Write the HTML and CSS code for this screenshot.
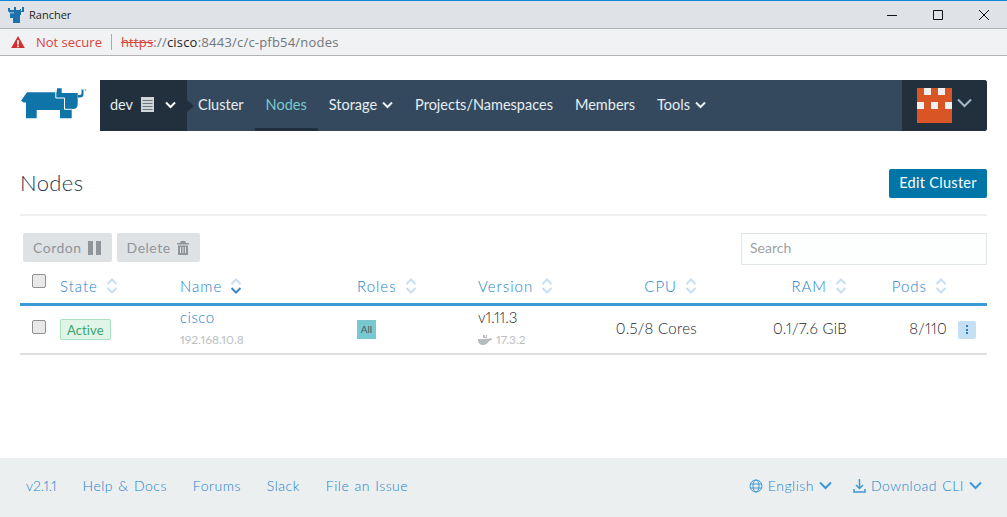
FILE: index.html
```html
<!DOCTYPE html>
<html lang="en">
<head>
<meta charset="utf-8">
<title>Rancher</title>
<link rel="stylesheet" href="styles.css">
</head>
<body>
<div class="titlebar">
  <svg class="fav" width="16" height="17" viewBox="0 0 16 17"><path fill="#1d72ab" d="M0 2h2v2h4V1h2v3h4V3h1v2h1V1h2v5h-3v3h-1v8H5v-5H2V7L0 5z"/><path fill="#7fb4d6" d="M2 6h4v1.500H2z"/></svg>
  <span class="title-text">Rancher</span>
  <div class="winctl">
    <svg width="10" height="10" viewBox="0 0 10 10"><path d="M0 5.500h10" stroke="#111" fill="none"/></svg>
    <svg width="10" height="10" viewBox="0 0 10 10"><path d="M.5.500h9v9h-9z" stroke="#111" fill="none"/></svg>
    <svg width="10" height="10" viewBox="0 0 10 10"><path d="M0 0l10 10M10 0L0 10" stroke="#111" fill="none"/></svg>
  </div>
</div>
<div class="addressbar">
  <svg width="14" height="12" viewBox="0 0 16 14"><path fill="#d32f2f" d="M8 0l8 14H0z"/><path fill="#fff" d="M7 5h2v5H7zM7 11h2v2H7z"/></svg>
  <span class="not-secure">Not secure</span>
  <span class="addr-sep"></span>
  <span class="url"><s class="https">https</s>://<b class="host">cisco</b>:8443/c/c-pfb54/nodes</span>
</div>
<div class="page">
  <header class="top">
    <svg class="logo" width="68" height="34" viewBox="20 88 68 34">
      <path fill="#0f74a8" d="M21 101.700L27 93.300H56.700L57 89.300H61.700V94H77.700V105Q77.700 110 73 110H71.700V119.300H60V111H36.700V119.300H26V103.500L23.500 103.500z"/>
      <path fill="#0f74a8" d="M78 96h1.500q2 0 2-1.500V90.500h2V95q0 3.500-3.500 3.500H78z"/>
      <path fill="none" stroke="#fff" stroke-width="1" d="M55.800 93V99H64.500V110.300H71.700"/>
      <circle cx="85.500" cy="91" r="1" fill="#8fbcd4"/>
    </svg>
    <nav class="nav">
      <div class="cluster">
        <span>dev</span>
        <svg class="server" width="13" height="15" viewBox="0 0 13 15"><rect width="13" height="15" fill="#d3d6d8"/><path d="M1.500 3.500h10M1.500 6.500h10M1.500 9.500h10M1.500 12.500h10" stroke="#6b767e"/></svg>
        <svg class="chev" width="11" height="8" viewBox="0 0 11 8"><path d="M1 1.500l4.500 4.500L10 1.500" fill="none" stroke="#fff" stroke-width="2"/></svg>
        <i class="cluster-arrow"></i>
      </div>
      <div class="links">
        <a class="link">Cluster</a>
        <a class="link active">Nodes</a>
        <a class="link">Storage <svg class="chev" width="11" height="8" viewBox="0 0 11 8"><path d="M1 1.500l4.500 4.500L10 1.500" fill="none" stroke="#e8eef2" stroke-width="2"/></svg></a>
        <a class="link">Projects/Namespaces</a>
        <a class="link">Members</a>
        <a class="link">Tools <svg class="chev" width="11" height="8" viewBox="0 0 11 8"><path d="M1 1.500l4.500 4.500L10 1.500" fill="none" stroke="#e8eef2" stroke-width="2"/></svg></a>
      </div>
      <div class="user">
        <svg width="35" height="35" viewBox="0 0 35 35"><rect width="35" height="35" fill="#d95526"/><path fill="#f0f0f0" d="M7 0h7v7H7zM21 0h7v7h-7zM0 14h7v7H0zM14 14h7v7h-7zM28 14h7v7h-7z"/></svg>
        <svg class="user-chev" width="15" height="10" viewBox="0 0 15 10"><path d="M1 1.500l6.500 6.500L14 1.500" fill="none" stroke="#a3b9c6" stroke-width="2"/></svg>
      </div>
    </nav>
  </header>

  <section class="heading">
    <h1>Nodes</h1>
    <button class="edit">Edit Cluster</button>
  </section>

  <section class="toolbar">
    <div class="actions">
      <button class="act">Cordon <svg width="13" height="14" viewBox="0 0 13 14"><path fill="#8f959a" d="M0 0h5v14H0zM8 0h5v14H8z"/></svg></button>
      <button class="act">Delete <svg width="12" height="14" viewBox="0 0 12 14"><path fill="#8f959a" d="M4 0h4l1 2h3v1.500H0V2h3zM1 4.500h10V14H1zM3 6v6h1V6zM5.500 6v6h1V6zM8 6v6h1V6z"/></svg></button>
    </div>
    <div class="search">Search</div>
  </section>

  <div class="grid thead">
    <div class="cell"><span class="check"></span></div>
    <div class="cell">State <svg class="sort" viewBox="0 0 12 18"><use href="#sort"/></svg></div>
    <div class="cell">Name <svg class="sort" viewBox="0 0 12 18"><use href="#sort-down"/></svg></div>
    <div class="cell">Roles <svg class="sort" viewBox="0 0 12 18"><use href="#sort"/></svg></div>
    <div class="cell">Version <svg class="sort" viewBox="0 0 12 18"><use href="#sort"/></svg></div>
    <div class="cell right">CPU <svg class="sort" viewBox="0 0 12 18"><use href="#sort"/></svg></div>
    <div class="cell right">RAM <svg class="sort" viewBox="0 0 12 18"><use href="#sort"/></svg></div>
    <div class="cell right">Pods <svg class="sort" viewBox="0 0 12 18"><use href="#sort"/></svg></div>
    <div class="cell"></div>
  </div>

  <div class="grid trow">
    <div class="cell"><span class="check"></span></div>
    <div class="cell"><span class="badge">Active</span></div>
    <div class="cell stack">
      <a class="node">cisco</a>
      <span class="sub">192.168.10.8</span>
    </div>
    <div class="cell"><span class="role">All</span></div>
    <div class="cell stack">
      <span class="ver">v1.11.3</span>
      <span class="sub"><svg width="14" height="10" viewBox="0 0 14 10"><path fill="#b4bcc0" d="M5 0h2v2h1V0h1v3.500c1.500.5 3 0 4-.5l1 1c-1 1.500-2 1.500-3 2-1 2-3 4-6 4C2 10 0 8 0 4h9V3H5z"/></svg> 17.3.2</span>
    </div>
    <div class="cell right num">0.5/8 Cores</div>
    <div class="cell right num">0.1/7.6 GiB</div>
    <div class="cell right num">8/110</div>
    <div class="cell kebab-cell"><span class="kebab"><i></i><i></i><i></i></span></div>
  </div>
</div>

<footer class="footer">
  <div class="foot-left">
    <a class="version">v2.1.1</a><a>Help &amp; Docs</a><a>Forums</a><a>Slack</a><a>File an Issue</a>
  </div>
  <div class="foot-right">
    <a><svg width="14" height="14" viewBox="0 0 14 14" fill="none" stroke="#3d98d3"><circle cx="7" cy="7" r="6"/><ellipse cx="7" cy="7" rx="3" ry="6"/><path d="M1 5h12M1 9h12"/></svg> English <svg width="13" height="9" viewBox="0 0 13 9"><path d="M1 1.500l5.500 5.500L12 1.500" fill="none" stroke="#3d98d3" stroke-width="2"/></svg></a>
    <a><svg width="13" height="14" viewBox="0 0 13 14" fill="none" stroke="#3d98d3" stroke-width="1.500"><path d="M6.500 0v9M3 6l3.500 3.500L10 6M1 10v3h11v-3"/></svg> Download CLI <svg width="13" height="9" viewBox="0 0 13 9"><path d="M1 1.500l5.500 5.500L12 1.500" fill="none" stroke="#3d98d3" stroke-width="2"/></svg></a>
  </div>
</footer>

<svg class="defs" width="0" height="0">
  <defs>
    <g id="sort"><path d="M1.500 7L6 2.500 10.500 7M1.500 11L6 15.500 10.500 11" fill="none" stroke="#c8dff2" stroke-width="2"/></g>
    <g id="sort-down"><path d="M1.500 7L6 2.500 10.500 7" fill="none" stroke="#c8dff2" stroke-width="2"/><path d="M1.500 11L6 15.500 10.500 11" fill="none" stroke="#3d86c6" stroke-width="2"/></g>
  </defs>
</svg>
</body>
</html>
```
FILE: styles.css
```css
* { box-sizing: border-box; }
html, body { margin: 0; padding: 0; height: 100%; }
body {
  font-family: "Lato", "Liberation Sans", sans-serif;
  font-feature-settings: "pnum" 1;
  font-variant-numeric: proportional-nums;
  background: #fff;
  color: #2e3a44;
  display: flex;
  flex-direction: column;
  overflow: hidden;
}
.defs { position: absolute; }

.titlebar {
  height: 29px;
  flex: none;
  display: flex;
  align-items: center;
  background: #dfe2e6;
  border-top: 1px solid #0c86d8;
  border-bottom: 1px solid #b3b3b3;
  padding-left: 8px;
  font-family: "Open Sans", sans-serif;
  font-size: 11px;
  color: #222;
}
.title-text { margin-left: 5px; }
.winctl {
  margin-left: auto;
  display: flex;
  gap: 36px;
  padding-right: 18px;
}
.addressbar {
  height: 27px;
  flex: none;
  display: flex;
  align-items: center;
  background: #f1f2f4;
  border-bottom: 1px solid #b3b3b3;
  padding-left: 11px;
  font-family: "Open Sans", sans-serif;
  font-size: 13px;
}
.not-secure { color: #d8433a; margin-left: 11px; }
.addr-sep { width: 1px; height: 16px; background: #aaa; margin: 0 9px; }
.url { color: #70757a; letter-spacing: .2px; }
.https { color: #d8433a; }
.host { color: #222; font-weight: 400; }

.page { padding: 24px 20px 0; flex: 1; }
.top { display: flex; align-items: center; height: 51px; }
.logo { flex: none; width: 68px; margin-right: 12px; margin-top: -4px; }
.nav {
  flex: 1;
  display: flex;
  height: 51px;
  background: #34495e;
  border-radius: 0 3px 3px 0;
  color: #e8eef2;
  font-size: 14.500px;
}
.cluster {
  position: relative;
  width: 87px;
  background: #22303e;
  display: flex;
  align-items: center;
  padding: 0 0 2px 10px;
  gap: 8px;
}
.cluster .chev { margin-left: 3px; }
.cluster-arrow {
  position: absolute;
  left: 100%;
  top: 20px;
  border: 6px solid transparent;
  border-left: 7px solid #22303e;
  border-right: 0;
}
.links { flex: 1; display: flex; }
.link {
  display: flex;
  align-items: center;
  gap: 5px;
  padding: 0 11px 2px;
  position: relative;
}
.active { color: #78c9cf; }
.active::after {
  content: "";
  position: absolute;
  left: 0; right: 0; bottom: 0;
  height: 3px;
  background: #22303e;
}
.user {
  width: 85px;
  background: #22303e;
  border-radius: 0 3px 3px 0;
  display: flex;
  align-items: flex-start;
  padding: 8px 0 0 15px;
  gap: 5px;
}
.user-chev { margin-top: 10px; }

.heading {
  display: flex;
  justify-content: space-between;
  align-items: center;
  height: 85px;
  padding: 38px 0 17px;
  border-bottom: 2px solid #edeff0;
}
h1 { margin: 0 0 2px; font-size: 22px; font-weight: 300; color: #1f3850; letter-spacing: .4px; }
.edit {
  font: inherit;
  font-size: 14.500px;
  letter-spacing: .3px;
  height: 29px;
  width: 98px;
  padding: 0 0 2px;
  color: #fff;
  background: #0075a8;
  border: 0;
  border-radius: 2px;
}
.toolbar {
  display: flex;
  justify-content: space-between;
  padding: 17px 0 0 3px;
}
.actions { display: flex; gap: 5px; }
.act {
  font: inherit;
  font-size: 14px;
  letter-spacing: .5px;
  height: 29px;
  padding: 0 11px 0 10px;
  color: #8f959a;
  background: #dfe2e5;
  border: 0;
  border-radius: 2px;
  display: flex;
  align-items: center;
  gap: 6px;
}
.search {
  width: 246px;
  height: 32px;
  border: 1px solid #dfe5e4;
  background: #fdfefe;
  color: #9ea3a7;
  font-size: 14px;
  line-height: 28px;
  padding-left: 8px;
}
.grid {
  display: grid;
  grid-template-columns: 40px 120px 177px 121px 119px 100px 150px 100px 40px;
  align-items: center;
}
.thead {
  height: 41px;
  padding-top: 4px;
  border-bottom: 3px solid #3d98d3;
  color: #1c82cc;
  font-size: 15px;
  font-weight: 300;
  letter-spacing: 1px;
}
.trow {
  height: 49px;
  border-bottom: 2px solid #dcdee0;
  font-size: 15px;
  font-weight: 300;
}
.cell { display: flex; align-items: center; gap: 8px; }
.right { justify-content: flex-end; }
.stack { flex-direction: column; align-items: flex-start; gap: 6px; padding-bottom: 4px; }
.sort { width: 12px; height: 18px; flex: none; }
.check {
  display: block;
  width: 14px;
  height: 14px;
  margin-left: 12px;
  background: #e8e8e8;
  border: 1px solid #8f8f8f;
  border-radius: 2px;
}
.thead .check { margin-top: -10px; }
.trow .check { margin-top: -6px; }
.badge {
  font-size: 13px;
  font-weight: 400;
  letter-spacing: .1px;
  color: #3aa66b;
  background: #e1f4e8;
  border: 1px solid #a8e0bf;
  border-radius: 2px;
  padding: 1px 6px;
  height: 21px;
  line-height: 18px;
}
.node { color: #1c82cc; letter-spacing: .5px; }
.sub { color: #bcc0c2; font-size: 12px; font-weight: 400; display: flex; align-items: center; gap: 4px; }
.role {
  width: 19px;
  height: 19px;
  background: #78c9cf;
  color: #4a5a60;
  font-size: 10px;
  font-weight: 400;
  text-align: center;
  line-height: 19px;
}
.ver { color: #1a242c; }
.num { color: #1a242c; letter-spacing: .3px; padding-bottom: 3px; }
.kebab-cell { padding-left: 11px; }
.kebab {
  width: 18px;
  height: 18px;
  background: #c5e0f5;
  border-radius: 2px;
  display: flex;
  flex-direction: column;
  align-items: center;
  justify-content: center;
  gap: 1.500px;
}
.kebab i { display: block; width: 2px; height: 2px; background: #2a7fc0; }

.footer {
  flex: none;
  height: 59px;
  background: #ebeff0;
  padding: 0 25px 4px 26px;
  display: flex;
  justify-content: space-between;
  align-items: center;
  color: #1c82cc;
  font-size: 14px;
  font-weight: 300;
  letter-spacing: .5px;
  word-spacing: 1px;
}
.version { letter-spacing: 0; }
.foot-left { display: flex; gap: 26px; }
.foot-right { display: flex; gap: 21px; }
.foot-right a { display: flex; align-items: center; gap: 5px; }
```
